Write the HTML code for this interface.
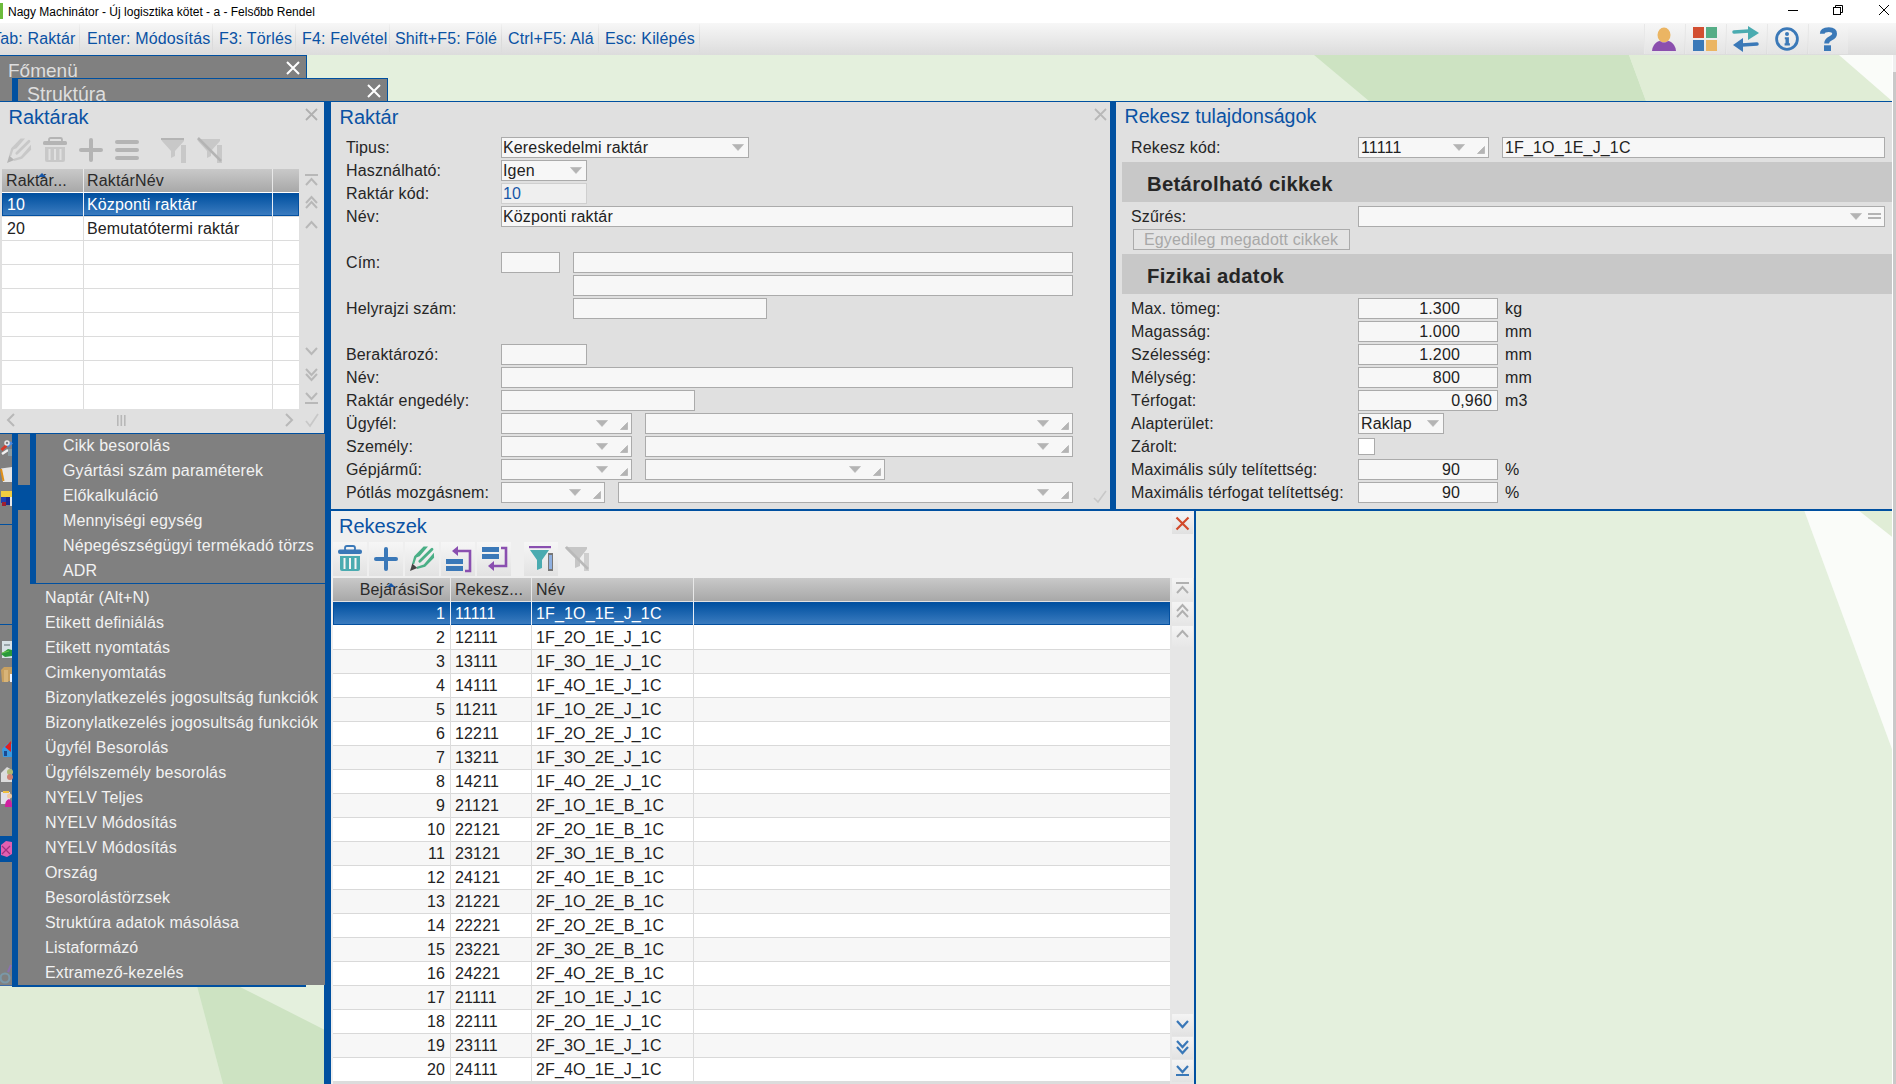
<!DOCTYPE html><html><head><meta charset="utf-8"><style>body{margin:0;width:1896px;height:1084px;overflow:hidden;position:relative;font-family:"Liberation Sans",sans-serif;background:#e4f0dd}div{box-sizing:border-box}</style></head><body><svg style="position:absolute;left:0;top:0" width="1896" height="1084">
<rect x="0" y="55" width="1896" height="1029" fill="#e4f0dd"/>
<polygon points="1314,55 1629,55 1646,101 1369,101" fill="#cde3c2"/>
<polygon points="1629,55 1839,55 1892,101 1646,101" fill="#e0edd6"/>
<polygon points="1839,55 1896,55 1896,101 1892,101" fill="#fafcf9"/>
<polygon points="1804,510 1896,510 1896,760" fill="#fafcf9"/>
<polygon points="1858,510 1896,510 1896,540" fill="#e0edd6"/>
<polygon points="0,986 197,986 223,1084 0,1084" fill="#e0ecd6"/>
<polygon points="197,986 238,986 325,1030 325,1084 223,1084" fill="#cde3c2"/>
</svg><div style="position:absolute;left:0px;top:0px;width:1896px;height:23px;background:#fff"></div><div style="position:absolute;left:0px;top:3px;width:3px;height:16px;background:#6cbb3c"></div><div style="position:absolute;left:8px;top:5.84px;font-size:12px;line-height:12px;color:#000;font-weight:400;white-space:pre;">Nagy Machinátor - Új logisztika kötet - a - Felsőbb Rendel</div><div style="position:absolute;left:1788px;top:10px;width:10px;height:1px;background:#000"></div><svg style="position:absolute;left:1828px;top:0" width="20" height="23"><rect x="5.5" y="7.5" width="7" height="7" fill="none" stroke="#000"/><path d="M7.5 7.5V5.5H14.5V12.5H12.5" fill="none" stroke="#000"/></svg><svg style="position:absolute;left:1874px;top:0" width="20" height="23"><path d="M5 5L15 15M15 5L5 15" stroke="#000" stroke-width="1"/></svg><div style="position:absolute;left:0px;top:23px;width:1896px;height:32px;background:linear-gradient(#f7f7f7,#dcdcdc)"></div><div style="position:absolute;left:-8px;top:31.46px;font-size:16px;line-height:16px;color:#0a52a4;font-weight:400;white-space:pre;letter-spacing:0.15px;">Tab: Raktár</div><div style="position:absolute;left:79px;top:24px;width:1px;height:30px;background:linear-gradient(rgba(220,220,220,0.2),rgba(200,200,200,0.5),rgba(220,220,220,0.2))"></div><div style="position:absolute;left:87px;top:31.46px;font-size:16px;line-height:16px;color:#0a52a4;font-weight:400;white-space:pre;letter-spacing:0.15px;">Enter: Módosítás</div><div style="position:absolute;left:212px;top:24px;width:1px;height:30px;background:linear-gradient(rgba(220,220,220,0.2),rgba(200,200,200,0.5),rgba(220,220,220,0.2))"></div><div style="position:absolute;left:219px;top:31.46px;font-size:16px;line-height:16px;color:#0a52a4;font-weight:400;white-space:pre;letter-spacing:0.15px;">F3: Törlés</div><div style="position:absolute;left:295px;top:24px;width:1px;height:30px;background:linear-gradient(rgba(220,220,220,0.2),rgba(200,200,200,0.5),rgba(220,220,220,0.2))"></div><div style="position:absolute;left:302px;top:31.46px;font-size:16px;line-height:16px;color:#0a52a4;font-weight:400;white-space:pre;letter-spacing:0.15px;">F4: Felvétel</div><div style="position:absolute;left:389px;top:24px;width:1px;height:30px;background:linear-gradient(rgba(220,220,220,0.2),rgba(200,200,200,0.5),rgba(220,220,220,0.2))"></div><div style="position:absolute;left:395px;top:31.46px;font-size:16px;line-height:16px;color:#0a52a4;font-weight:400;white-space:pre;letter-spacing:0.15px;">Shift+F5: Fölé</div><div style="position:absolute;left:501px;top:24px;width:1px;height:30px;background:linear-gradient(rgba(220,220,220,0.2),rgba(200,200,200,0.5),rgba(220,220,220,0.2))"></div><div style="position:absolute;left:508px;top:31.46px;font-size:16px;line-height:16px;color:#0a52a4;font-weight:400;white-space:pre;letter-spacing:0.15px;">Ctrl+F5: Alá</div><div style="position:absolute;left:598px;top:24px;width:1px;height:30px;background:linear-gradient(rgba(220,220,220,0.2),rgba(200,200,200,0.5),rgba(220,220,220,0.2))"></div><div style="position:absolute;left:605px;top:31.46px;font-size:16px;line-height:16px;color:#0a52a4;font-weight:400;white-space:pre;letter-spacing:0.15px;">Esc: Kilépés</div><div style="position:absolute;left:699px;top:24px;width:1px;height:30px;background:linear-gradient(rgba(220,220,220,0.2),rgba(200,200,200,0.5),rgba(220,220,220,0.2))"></div><div style="position:absolute;left:0px;top:55px;width:306px;height:1px;background:#0050a0"></div><div style="position:absolute;left:306px;top:55px;width:1px;height:23px;background:#0050a0"></div><div style="position:absolute;left:0px;top:56px;width:306px;height:45px;background:#808080"></div><div style="position:absolute;left:0;top:56px;width:306px;height:22px;overflow:hidden"><div style="position:absolute;left:8px;top:5.4px;font-size:19px;line-height:19px;color:#dedede;white-space:pre">Főmenü</div></div><svg style="position:absolute;left:285px;top:60px" width="16" height="16"><path d="M2 2L14 14M14 2L2 14" stroke="#fff" stroke-width="2"/></svg><div style="position:absolute;left:12px;top:78px;width:376px;height:1px;background:#0050a0"></div><div style="position:absolute;left:387px;top:78px;width:1px;height:23px;background:#0050a0"></div><div style="position:absolute;left:12px;top:79px;width:375px;height:22px;background:#808080"></div><div style="position:absolute;left:12px;top:79px;width:6px;height:22px;background:#0050a0"></div><div style="position:absolute;left:18px;top:79px;width:369px;height:22px;overflow:hidden"><div style="position:absolute;left:9px;top:5.899999999999999px;font-size:19.5px;line-height:19.5px;color:#dedede;white-space:pre">Struktúra</div></div><svg style="position:absolute;left:366px;top:83px" width="16" height="16"><path d="M2 2L14 14M14 2L2 14" stroke="#fff" stroke-width="2"/></svg><div style="position:absolute;left:0px;top:101px;width:1892px;height:1px;background:#0050a0"></div><div style="position:absolute;left:0px;top:102px;width:324px;height:332px;background:#e0e0e0"></div><div style="position:absolute;left:324px;top:102px;width:7px;height:982px;background:#0050a0"></div><div style="position:absolute;left:331px;top:102px;width:779px;height:407px;background:#e0e0e0"></div><div style="position:absolute;left:1110px;top:102px;width:6px;height:407px;background:#0050a0"></div><div style="position:absolute;left:1116px;top:102px;width:776px;height:407px;background:#e0e0e0"></div><div style="position:absolute;left:1892px;top:55px;width:1px;height:1029px;background:#ffffff"></div><div style="position:absolute;left:1893px;top:55px;width:3px;height:17px;background:#efefef"></div><div style="position:absolute;left:1893px;top:72px;width:3px;height:1012px;background:#c9c9c9"></div><div style="position:absolute;left:331px;top:509px;width:1561px;height:2px;background:#0050a0"></div><div style="position:absolute;left:8.5px;top:106.87px;font-size:20px;line-height:20px;color:#0a52a4;font-weight:400;white-space:pre;">Raktárak</div><svg style="position:absolute;left:305px;top:108px" width="13" height="13"><path d="M1 1L12 12M12 1L1 12" stroke="#b0b0b0" stroke-width="1.8"/></svg><svg style="position:absolute;left:0;top:130px" width="240" height="40">
<path d="M9 26L11.2 18.3L20.6 8.6H25L16.6 18.2L13.4 19.6L11.2 26Z" fill="#c8c8c8"/>
<path d="M30.9 14.8L31.1 19.8L22.2 28.8L14 31L13.8 28.8L20.8 26.6Z" fill="#c8c8c8"/>
<path d="M16.8 23.2L29 11.2" stroke="#c8c8c8" stroke-width="2.8" stroke-linecap="round"/>
<path d="M7 33L9.3 25.5L14.3 30Z" fill="#b4b4b4"/>
<rect x="43" y="11" width="24" height="4" rx="1.5" fill="#b4b4b4"/>
<rect x="49" y="8" width="13" height="4" rx="1.5" fill="none" stroke="#b4b4b4" stroke-width="1.8"/>
<path d="M45 17H65V30Q65 32 63 32H47Q45 32 45 30Z" fill="#c8c8c8"/>
<rect x="48.5" y="19" width="2" height="11" fill="#e0e0e0"/><rect x="54" y="19" width="2" height="11" fill="#e0e0e0"/><rect x="59.5" y="19" width="2" height="11" fill="#e0e0e0"/>
<rect x="89" y="8" width="4" height="24" rx="2" fill="#b4b4b4"/><rect x="79" y="18" width="24" height="4" rx="2" fill="#b4b4b4"/>
<rect x="115" y="10" width="24" height="4" rx="2" fill="#b4b4b4"/><rect x="115" y="18" width="24" height="4" rx="2" fill="#b4b4b4"/><rect x="115" y="26" width="24" height="4" rx="2" fill="#b4b4b4"/>
<path d="M161 9H184V11L175 21V26L171 28V21L162 11Z" fill="#c8c8c8"/><rect x="161" y="8" width="23" height="2" fill="#b4b4b4"/>
<rect x="181" y="15" width="5" height="18" fill="#c8c8c8"/>
<path d="M197 9H220V11L211 21V26L207 28V21L198 11Z" fill="#c8c8c8"/><rect x="217" y="15" width="5" height="18" fill="#c8c8c8"/>
<path d="M198 8L221 31" stroke="#b4b4b4" stroke-width="2.5"/>
</svg><div style="position:absolute;left:2px;top:169px;width:297px;height:23px;background:linear-gradient(#c9c9c9,#a8a8a8)"></div><div style="position:absolute;left:83px;top:169px;width:1px;height:23px;background:#e8e8e8"></div><div style="position:absolute;left:272px;top:169px;width:1px;height:23px;background:#e8e8e8"></div><div style="position:absolute;left:6px;top:173.46px;font-size:16px;line-height:16px;color:#2a2a2a;font-weight:400;white-space:pre;letter-spacing:0.15px;">Raktár...</div><svg style="position:absolute;left:37px;top:172px" width="10" height="6"><path d="M1 5L5 1L9 5Z" fill="#1656a8"/></svg><div style="position:absolute;left:87px;top:173.46px;font-size:16px;line-height:16px;color:#2a2a2a;font-weight:400;white-space:pre;letter-spacing:0.15px;">RaktárNév</div><div style="position:absolute;left:2px;top:192px;width:297px;height:217px;background:#fff"></div><div style="position:absolute;left:2px;top:193px;width:297px;height:23px;background:linear-gradient(#0050a0,#3a7bbf);border:1px solid #0450a0"></div><div style="position:absolute;left:2px;top:216px;width:297px;height:1px;background:#dcdcdc"></div><div style="position:absolute;left:2px;top:240px;width:297px;height:1px;background:#dcdcdc"></div><div style="position:absolute;left:2px;top:264px;width:297px;height:1px;background:#dcdcdc"></div><div style="position:absolute;left:2px;top:288px;width:297px;height:1px;background:#dcdcdc"></div><div style="position:absolute;left:2px;top:312px;width:297px;height:1px;background:#dcdcdc"></div><div style="position:absolute;left:2px;top:336px;width:297px;height:1px;background:#dcdcdc"></div><div style="position:absolute;left:2px;top:360px;width:297px;height:1px;background:#dcdcdc"></div><div style="position:absolute;left:2px;top:384px;width:297px;height:1px;background:#dcdcdc"></div><div style="position:absolute;left:83px;top:193px;width:1px;height:216px;background:#dcdcdc"></div><div style="position:absolute;left:272px;top:193px;width:1px;height:216px;background:#dcdcdc"></div><div style="position:absolute;left:83px;top:193px;width:1px;height:23px;background:#e8eef6"></div><div style="position:absolute;left:272px;top:193px;width:1px;height:23px;background:#e8eef6"></div><div style="position:absolute;left:7px;top:197.46px;font-size:16px;line-height:16px;color:#fff;font-weight:400;white-space:pre;letter-spacing:0.15px;">10</div><div style="position:absolute;left:87px;top:197.46px;font-size:16px;line-height:16px;color:#fff;font-weight:400;white-space:pre;letter-spacing:0.15px;">Központi raktár</div><div style="position:absolute;left:7px;top:221.46px;font-size:16px;line-height:16px;color:#222;font-weight:400;white-space:pre;letter-spacing:0.15px;">20</div><div style="position:absolute;left:87px;top:221.46px;font-size:16px;line-height:16px;color:#222;font-weight:400;white-space:pre;letter-spacing:0.15px;">Bemutatótermi raktár</div><svg style="position:absolute;left:0;top:0;overflow:visible" width="1" height="1"><rect x="305" y="174" width="13" height="2" fill="#b8b8b8"/><path d="M306 185L311.5 179L317 185" fill="none" stroke="#b8b8b8" stroke-width="2"/><path d="M306 203L311.5 197L317 203" fill="none" stroke="#b8b8b8" stroke-width="2"/><path d="M306 208L311.5 202L317 208" fill="none" stroke="#b8b8b8" stroke-width="2"/><path d="M306 228L311.5 222L317 228" fill="none" stroke="#b8b8b8" stroke-width="2"/><path d="M306 348L311.5 354L317 348" fill="none" stroke="#b8b8b8" stroke-width="2"/><path d="M306 369L311.5 375L317 369" fill="none" stroke="#b8b8b8" stroke-width="2"/><path d="M306 374L311.5 380L317 374" fill="none" stroke="#b8b8b8" stroke-width="2"/><path d="M306 393L311.5 399L317 393" fill="none" stroke="#b8b8b8" stroke-width="2"/><rect x="305" y="402" width="13" height="2" fill="#b8b8b8"/></svg><svg style="position:absolute;left:0;top:405px" width="324" height="28">
<path d="M14 9L8 15L14 21" fill="none" stroke="#b8b8b8" stroke-width="2"/>
<rect x="117" y="10" width="1.6" height="11" fill="#b8b8b8"/><rect x="120.5" y="10" width="1.6" height="11" fill="#b8b8b8"/><rect x="124" y="10" width="1.6" height="11" fill="#b8b8b8"/>
<path d="M286 9L292 15L286 21" fill="none" stroke="#b8b8b8" stroke-width="2"/>
<path d="M306 16L310 21L318 9" fill="none" stroke="#c8c8c8" stroke-width="1.8"/>
</svg><div style="position:absolute;left:0px;top:433px;width:324px;height:1px;background:#0050a0"></div><div style="position:absolute;left:339.5px;top:106.87px;font-size:20px;line-height:20px;color:#0a52a4;font-weight:400;white-space:pre;">Raktár</div><svg style="position:absolute;left:1094px;top:108px" width="13" height="13"><path d="M1 1L12 12M12 1L1 12" stroke="#b8b8b8" stroke-width="1.8"/></svg><div style="position:absolute;left:346px;top:140.16px;font-size:16px;line-height:16px;color:#262626;font-weight:400;white-space:pre;letter-spacing:0.15px;">Tipus:</div><div style="position:absolute;left:346px;top:163.16px;font-size:16px;line-height:16px;color:#262626;font-weight:400;white-space:pre;letter-spacing:0.15px;">Használható:</div><div style="position:absolute;left:346px;top:186.16px;font-size:16px;line-height:16px;color:#262626;font-weight:400;white-space:pre;letter-spacing:0.15px;">Raktár kód:</div><div style="position:absolute;left:346px;top:209.16px;font-size:16px;line-height:16px;color:#262626;font-weight:400;white-space:pre;letter-spacing:0.15px;">Név:</div><div style="position:absolute;left:346px;top:255.16px;font-size:16px;line-height:16px;color:#262626;font-weight:400;white-space:pre;letter-spacing:0.15px;">Cím:</div><div style="position:absolute;left:346px;top:301.16px;font-size:16px;line-height:16px;color:#262626;font-weight:400;white-space:pre;letter-spacing:0.15px;">Helyrajzi szám:</div><div style="position:absolute;left:346px;top:347.16px;font-size:16px;line-height:16px;color:#262626;font-weight:400;white-space:pre;letter-spacing:0.15px;">Beraktározó:</div><div style="position:absolute;left:346px;top:370.16px;font-size:16px;line-height:16px;color:#262626;font-weight:400;white-space:pre;letter-spacing:0.15px;">Név:</div><div style="position:absolute;left:346px;top:393.16px;font-size:16px;line-height:16px;color:#262626;font-weight:400;white-space:pre;letter-spacing:0.15px;">Raktár engedély:</div><div style="position:absolute;left:346px;top:416.16px;font-size:16px;line-height:16px;color:#262626;font-weight:400;white-space:pre;letter-spacing:0.15px;">Ügyfél:</div><div style="position:absolute;left:346px;top:439.16px;font-size:16px;line-height:16px;color:#262626;font-weight:400;white-space:pre;letter-spacing:0.15px;">Személy:</div><div style="position:absolute;left:346px;top:462.16px;font-size:16px;line-height:16px;color:#262626;font-weight:400;white-space:pre;letter-spacing:0.15px;">Gépjármű:</div><div style="position:absolute;left:346px;top:485.16px;font-size:16px;line-height:16px;color:#262626;font-weight:400;white-space:pre;letter-spacing:0.15px;">Pótlás mozgásnem:</div><div style="position:absolute;left:501px;top:137px;width:248px;height:21px;background:#f7f7f7;border:1px solid #ababab;box-sizing:border-box"></div><div style="position:absolute;left:503px;top:140.16px;font-size:16px;line-height:16px;color:#222;font-weight:400;white-space:pre;letter-spacing:0.15px;">Kereskedelmi raktár</div><svg style="position:absolute;left:732px;top:144px" width="12" height="7"><path d="M0.5 0.5H11.5L6 6.5Z" fill="#b4b4b4" stroke="#b4b4b4" stroke-width="0.6" stroke-linejoin="round"/></svg><div style="position:absolute;left:501px;top:160px;width:86px;height:21px;background:#f7f7f7;border:1px solid #ababab;box-sizing:border-box"></div><div style="position:absolute;left:503px;top:163.16px;font-size:16px;line-height:16px;color:#222;font-weight:400;white-space:pre;letter-spacing:0.15px;">Igen</div><svg style="position:absolute;left:570px;top:167px" width="12" height="7"><path d="M0.5 0.5H11.5L6 6.5Z" fill="#b4b4b4" stroke="#b4b4b4" stroke-width="0.6" stroke-linejoin="round"/></svg><div style="position:absolute;left:501px;top:183px;width:86px;height:21px;background:#efefef;border:1px solid #cfcfcf;box-sizing:border-box"></div><div style="position:absolute;left:503px;top:186.16px;font-size:16px;line-height:16px;color:#1656a8;font-weight:400;white-space:pre;letter-spacing:0.15px;">10</div><div style="position:absolute;left:501px;top:206px;width:572px;height:21px;background:#f7f7f7;border:1px solid #ababab;box-sizing:border-box"></div><div style="position:absolute;left:503px;top:209.16px;font-size:16px;line-height:16px;color:#222;font-weight:400;white-space:pre;letter-spacing:0.15px;">Központi raktár</div><div style="position:absolute;left:501px;top:252px;width:59px;height:21px;background:#f7f7f7;border:1px solid #ababab;box-sizing:border-box"></div><div style="position:absolute;left:573px;top:252px;width:500px;height:21px;background:#f7f7f7;border:1px solid #ababab;box-sizing:border-box"></div><div style="position:absolute;left:573px;top:275px;width:500px;height:21px;background:#f7f7f7;border:1px solid #ababab;box-sizing:border-box"></div><div style="position:absolute;left:573px;top:298px;width:194px;height:21px;background:#f7f7f7;border:1px solid #ababab;box-sizing:border-box"></div><div style="position:absolute;left:501px;top:344px;width:86px;height:21px;background:#f7f7f7;border:1px solid #ababab;box-sizing:border-box"></div><div style="position:absolute;left:501px;top:367px;width:572px;height:21px;background:#f7f7f7;border:1px solid #ababab;box-sizing:border-box"></div><div style="position:absolute;left:501px;top:390px;width:194px;height:21px;background:#f7f7f7;border:1px solid #ababab;box-sizing:border-box"></div><div style="position:absolute;left:501px;top:413px;width:131px;height:21px;background:#f7f7f7;border:1px solid #ababab;box-sizing:border-box"></div><svg style="position:absolute;left:596px;top:420px" width="12" height="7"><path d="M0.5 0.5H11.5L6 6.5Z" fill="#b4b4b4" stroke="#b4b4b4" stroke-width="0.6" stroke-linejoin="round"/></svg><svg style="position:absolute;left:620px;top:422px" width="8" height="8"><path d="M7.5 0.5V7.5H0.5Z" fill="#b4b4b4" stroke="#b4b4b4" stroke-width="0.8" stroke-linejoin="round"/></svg><div style="position:absolute;left:645px;top:413px;width:428px;height:21px;background:#f7f7f7;border:1px solid #ababab;box-sizing:border-box"></div><svg style="position:absolute;left:1037px;top:420px" width="12" height="7"><path d="M0.5 0.5H11.5L6 6.5Z" fill="#b4b4b4" stroke="#b4b4b4" stroke-width="0.6" stroke-linejoin="round"/></svg><svg style="position:absolute;left:1061px;top:422px" width="8" height="8"><path d="M7.5 0.5V7.5H0.5Z" fill="#b4b4b4" stroke="#b4b4b4" stroke-width="0.8" stroke-linejoin="round"/></svg><div style="position:absolute;left:501px;top:436px;width:131px;height:21px;background:#f7f7f7;border:1px solid #ababab;box-sizing:border-box"></div><svg style="position:absolute;left:596px;top:443px" width="12" height="7"><path d="M0.5 0.5H11.5L6 6.5Z" fill="#b4b4b4" stroke="#b4b4b4" stroke-width="0.6" stroke-linejoin="round"/></svg><svg style="position:absolute;left:620px;top:445px" width="8" height="8"><path d="M7.5 0.5V7.5H0.5Z" fill="#b4b4b4" stroke="#b4b4b4" stroke-width="0.8" stroke-linejoin="round"/></svg><div style="position:absolute;left:645px;top:436px;width:428px;height:21px;background:#f7f7f7;border:1px solid #ababab;box-sizing:border-box"></div><svg style="position:absolute;left:1037px;top:443px" width="12" height="7"><path d="M0.5 0.5H11.5L6 6.5Z" fill="#b4b4b4" stroke="#b4b4b4" stroke-width="0.6" stroke-linejoin="round"/></svg><svg style="position:absolute;left:1061px;top:445px" width="8" height="8"><path d="M7.5 0.5V7.5H0.5Z" fill="#b4b4b4" stroke="#b4b4b4" stroke-width="0.8" stroke-linejoin="round"/></svg><div style="position:absolute;left:501px;top:459px;width:131px;height:21px;background:#f7f7f7;border:1px solid #ababab;box-sizing:border-box"></div><svg style="position:absolute;left:596px;top:466px" width="12" height="7"><path d="M0.5 0.5H11.5L6 6.5Z" fill="#b4b4b4" stroke="#b4b4b4" stroke-width="0.6" stroke-linejoin="round"/></svg><svg style="position:absolute;left:620px;top:468px" width="8" height="8"><path d="M7.5 0.5V7.5H0.5Z" fill="#b4b4b4" stroke="#b4b4b4" stroke-width="0.8" stroke-linejoin="round"/></svg><div style="position:absolute;left:645px;top:459px;width:240px;height:21px;background:#f7f7f7;border:1px solid #ababab;box-sizing:border-box"></div><svg style="position:absolute;left:849px;top:466px" width="12" height="7"><path d="M0.5 0.5H11.5L6 6.5Z" fill="#b4b4b4" stroke="#b4b4b4" stroke-width="0.6" stroke-linejoin="round"/></svg><svg style="position:absolute;left:873px;top:468px" width="8" height="8"><path d="M7.5 0.5V7.5H0.5Z" fill="#b4b4b4" stroke="#b4b4b4" stroke-width="0.8" stroke-linejoin="round"/></svg><div style="position:absolute;left:501px;top:482px;width:104px;height:21px;background:#f7f7f7;border:1px solid #ababab;box-sizing:border-box"></div><svg style="position:absolute;left:569px;top:489px" width="12" height="7"><path d="M0.5 0.5H11.5L6 6.5Z" fill="#b4b4b4" stroke="#b4b4b4" stroke-width="0.6" stroke-linejoin="round"/></svg><svg style="position:absolute;left:593px;top:491px" width="8" height="8"><path d="M7.5 0.5V7.5H0.5Z" fill="#b4b4b4" stroke="#b4b4b4" stroke-width="0.8" stroke-linejoin="round"/></svg><div style="position:absolute;left:618px;top:482px;width:455px;height:21px;background:#f7f7f7;border:1px solid #ababab;box-sizing:border-box"></div><svg style="position:absolute;left:1037px;top:489px" width="12" height="7"><path d="M0.5 0.5H11.5L6 6.5Z" fill="#b4b4b4" stroke="#b4b4b4" stroke-width="0.6" stroke-linejoin="round"/></svg><svg style="position:absolute;left:1061px;top:491px" width="8" height="8"><path d="M7.5 0.5V7.5H0.5Z" fill="#b4b4b4" stroke="#b4b4b4" stroke-width="0.8" stroke-linejoin="round"/></svg><svg style="position:absolute;left:1092px;top:488px" width="16" height="16"><path d="M2 10L6 14L14 3" fill="none" stroke="#c8c8c8" stroke-width="1.6"/></svg><div style="position:absolute;left:1124.5px;top:107.31px;font-size:19.6px;line-height:19.6px;color:#0a52a4;font-weight:400;white-space:pre;">Rekesz tulajdonságok</div><div style="position:absolute;left:1131px;top:140.16px;font-size:16px;line-height:16px;color:#262626;font-weight:400;white-space:pre;letter-spacing:0.15px;">Rekesz kód:</div><div style="position:absolute;left:1358px;top:137px;width:131px;height:21px;background:#f7f7f7;border:1px solid #ababab;box-sizing:border-box"></div><svg style="position:absolute;left:1453px;top:144px" width="12" height="7"><path d="M0.5 0.5H11.5L6 6.5Z" fill="#b4b4b4" stroke="#b4b4b4" stroke-width="0.6" stroke-linejoin="round"/></svg><svg style="position:absolute;left:1477px;top:146px" width="8" height="8"><path d="M7.5 0.5V7.5H0.5Z" fill="#b4b4b4" stroke="#b4b4b4" stroke-width="0.8" stroke-linejoin="round"/></svg><div style="position:absolute;left:1361px;top:140.16px;font-size:16px;line-height:16px;color:#222;font-weight:400;white-space:pre;letter-spacing:0.15px;">11111</div><div style="position:absolute;left:1502px;top:137px;width:383px;height:21px;background:#f7f7f7;border:1px solid #ababab;box-sizing:border-box"></div><div style="position:absolute;left:1505px;top:140.16px;font-size:16px;line-height:16px;color:#222;font-weight:400;white-space:pre;letter-spacing:0.15px;">1F_1O_1E_J_1C</div><div style="position:absolute;left:1122px;top:162px;width:770px;height:40px;background:#c8c8c8"></div><div style="position:absolute;left:1147px;top:174.32px;font-size:20.3px;line-height:20.3px;color:#262626;font-weight:700;white-space:pre;letter-spacing:0.3px">Betárolható cikkek</div><div style="position:absolute;left:1131px;top:209.16px;font-size:16px;line-height:16px;color:#262626;font-weight:400;white-space:pre;letter-spacing:0.15px;">Szűrés:</div><div style="position:absolute;left:1358px;top:206px;width:527px;height:21px;background:#f7f7f7;border:1px solid #ababab;box-sizing:border-box"></div><svg style="position:absolute;left:1850px;top:213px" width="12" height="7"><path d="M0.5 0.5H11.5L6 6.5Z" fill="#b4b4b4" stroke="#b4b4b4" stroke-width="0.6" stroke-linejoin="round"/></svg><svg style="position:absolute;left:1867px;top:210px" width="16" height="12"><rect x="1" y="3" width="13" height="2" fill="#b4b4b4"/><rect x="1" y="7" width="13" height="2" fill="#b4b4b4"/></svg><div style="position:absolute;left:1133px;top:229px;width:217px;height:21px;border:1px solid #ababab;box-sizing:border-box;background:#e4e4e4"></div><div style="position:absolute;left:1144px;top:232.46px;font-size:16px;line-height:16px;color:#a8a8a8;font-weight:400;white-space:pre;letter-spacing:0.15px;">Egyedileg megadott cikkek</div><div style="position:absolute;left:1122px;top:254px;width:770px;height:40px;background:#c8c8c8"></div><div style="position:absolute;left:1147px;top:266.12px;font-size:20.3px;line-height:20.3px;color:#262626;font-weight:700;white-space:pre;letter-spacing:0.3px">Fizikai adatok</div><div style="position:absolute;left:1131px;top:301.16px;font-size:16px;line-height:16px;color:#262626;font-weight:400;white-space:pre;letter-spacing:0.15px;">Max. tömeg:</div><div style="position:absolute;left:1358px;top:298px;width:140px;height:21px;background:#f7f7f7;border:1px solid #ababab;box-sizing:border-box"></div><div style="position:absolute;left:860px;width:600px;text-align:right;top:301.16px;font-size:16px;line-height:16px;color:#222;font-weight:400;white-space:pre;letter-spacing:0.15px;">1.300</div><div style="position:absolute;left:1505px;top:301.16px;font-size:16px;line-height:16px;color:#222;font-weight:400;white-space:pre;letter-spacing:0.15px;">kg</div><div style="position:absolute;left:1131px;top:324.16px;font-size:16px;line-height:16px;color:#262626;font-weight:400;white-space:pre;letter-spacing:0.15px;">Magasság:</div><div style="position:absolute;left:1358px;top:321px;width:140px;height:21px;background:#f7f7f7;border:1px solid #ababab;box-sizing:border-box"></div><div style="position:absolute;left:860px;width:600px;text-align:right;top:324.16px;font-size:16px;line-height:16px;color:#222;font-weight:400;white-space:pre;letter-spacing:0.15px;">1.000</div><div style="position:absolute;left:1505px;top:324.16px;font-size:16px;line-height:16px;color:#222;font-weight:400;white-space:pre;letter-spacing:0.15px;">mm</div><div style="position:absolute;left:1131px;top:347.16px;font-size:16px;line-height:16px;color:#262626;font-weight:400;white-space:pre;letter-spacing:0.15px;">Szélesség:</div><div style="position:absolute;left:1358px;top:344px;width:140px;height:21px;background:#f7f7f7;border:1px solid #ababab;box-sizing:border-box"></div><div style="position:absolute;left:860px;width:600px;text-align:right;top:347.16px;font-size:16px;line-height:16px;color:#222;font-weight:400;white-space:pre;letter-spacing:0.15px;">1.200</div><div style="position:absolute;left:1505px;top:347.16px;font-size:16px;line-height:16px;color:#222;font-weight:400;white-space:pre;letter-spacing:0.15px;">mm</div><div style="position:absolute;left:1131px;top:370.16px;font-size:16px;line-height:16px;color:#262626;font-weight:400;white-space:pre;letter-spacing:0.15px;">Mélység:</div><div style="position:absolute;left:1358px;top:367px;width:140px;height:21px;background:#f7f7f7;border:1px solid #ababab;box-sizing:border-box"></div><div style="position:absolute;left:860px;width:600px;text-align:right;top:370.16px;font-size:16px;line-height:16px;color:#222;font-weight:400;white-space:pre;letter-spacing:0.15px;">800</div><div style="position:absolute;left:1505px;top:370.16px;font-size:16px;line-height:16px;color:#222;font-weight:400;white-space:pre;letter-spacing:0.15px;">mm</div><div style="position:absolute;left:1131px;top:393.16px;font-size:16px;line-height:16px;color:#262626;font-weight:400;white-space:pre;letter-spacing:0.15px;">Térfogat:</div><div style="position:absolute;left:1358px;top:390px;width:140px;height:21px;background:#f7f7f7;border:1px solid #ababab;box-sizing:border-box"></div><div style="position:absolute;left:892px;width:600px;text-align:right;top:393.16px;font-size:16px;line-height:16px;color:#222;font-weight:400;white-space:pre;letter-spacing:0.15px;">0,960</div><div style="position:absolute;left:1505px;top:393.16px;font-size:16px;line-height:16px;color:#222;font-weight:400;white-space:pre;letter-spacing:0.15px;">m3</div><div style="position:absolute;left:1131px;top:416.16px;font-size:16px;line-height:16px;color:#262626;font-weight:400;white-space:pre;letter-spacing:0.15px;">Alapterület:</div><div style="position:absolute;left:1358px;top:413px;width:86px;height:21px;background:#f7f7f7;border:1px solid #ababab;box-sizing:border-box"></div><svg style="position:absolute;left:1427px;top:420px" width="12" height="7"><path d="M0.5 0.5H11.5L6 6.5Z" fill="#b4b4b4" stroke="#b4b4b4" stroke-width="0.6" stroke-linejoin="round"/></svg><div style="position:absolute;left:1361px;top:416.16px;font-size:16px;line-height:16px;color:#222;font-weight:400;white-space:pre;letter-spacing:0.15px;">Raklap</div><div style="position:absolute;left:1131px;top:439.16px;font-size:16px;line-height:16px;color:#262626;font-weight:400;white-space:pre;letter-spacing:0.15px;">Zárolt:</div><div style="position:absolute;left:1358px;top:438px;width:17px;height:17px;background:#fff;border:1px solid #ababab;box-sizing:border-box"></div><div style="position:absolute;left:1131px;top:462.16px;font-size:16px;line-height:16px;color:#262626;font-weight:400;white-space:pre;letter-spacing:0.15px;">Maximális súly telítettség:</div><div style="position:absolute;left:1358px;top:459px;width:140px;height:21px;background:#f7f7f7;border:1px solid #ababab;box-sizing:border-box"></div><div style="position:absolute;left:860px;width:600px;text-align:right;top:462.16px;font-size:16px;line-height:16px;color:#222;font-weight:400;white-space:pre;letter-spacing:0.15px;">90</div><div style="position:absolute;left:1505px;top:462.16px;font-size:16px;line-height:16px;color:#222;font-weight:400;white-space:pre;letter-spacing:0.15px;">%</div><div style="position:absolute;left:1131px;top:485.16px;font-size:16px;line-height:16px;color:#262626;font-weight:400;white-space:pre;letter-spacing:0.15px;">Maximális térfogat telítettség:</div><div style="position:absolute;left:1358px;top:482px;width:140px;height:21px;background:#f7f7f7;border:1px solid #ababab;box-sizing:border-box"></div><div style="position:absolute;left:860px;width:600px;text-align:right;top:485.16px;font-size:16px;line-height:16px;color:#222;font-weight:400;white-space:pre;letter-spacing:0.15px;">90</div><div style="position:absolute;left:1505px;top:485.16px;font-size:16px;line-height:16px;color:#222;font-weight:400;white-space:pre;letter-spacing:0.15px;">%</div><div style="position:absolute;left:331px;top:511px;width:863px;height:573px;background:#efefef"></div><div style="position:absolute;left:1194px;top:509px;width:2px;height:575px;background:#0050a0"></div><div style="position:absolute;left:339px;top:515.67px;font-size:20px;line-height:20px;color:#0a52a4;font-weight:400;white-space:pre;">Rekeszek</div><div style="position:absolute;left:1172px;top:513px;width:21px;height:21px;background:linear-gradient(#f4f4f4,#e0e0e0)"></div><svg style="position:absolute;left:1175px;top:516px" width="15" height="15"><path d="M1.5 1.5L13.5 13.5M13.5 1.5L1.5 13.5" stroke="#d2492a" stroke-width="2.2"/></svg><div style="position:absolute;left:333px;top:542px;width:34px;height:34px;background:linear-gradient(#f6f6f6,#e2e2e2)"></div><div style="position:absolute;left:369px;top:542px;width:34px;height:34px;background:linear-gradient(#f6f6f6,#e2e2e2)"></div><div style="position:absolute;left:405px;top:542px;width:34px;height:34px;background:linear-gradient(#f6f6f6,#e2e2e2)"></div><div style="position:absolute;left:441px;top:542px;width:34px;height:34px;background:linear-gradient(#f6f6f6,#e2e2e2)"></div><div style="position:absolute;left:477px;top:542px;width:34px;height:34px;background:linear-gradient(#f6f6f6,#e2e2e2)"></div><div style="position:absolute;left:524px;top:542px;width:34px;height:34px;background:linear-gradient(#f6f6f6,#e2e2e2)"></div><svg style="position:absolute;left:0;top:0;overflow:visible" width="1" height="1">
<rect x="338" y="549.5" width="24" height="4.5" rx="2" fill="#3a78b8"/>
<rect x="345" y="546" width="10" height="5" rx="2" fill="none" stroke="#3a78b8" stroke-width="1.8"/>
<path d="M340 556H360V569Q360 571 358 571H342Q340 571 340 569Z" fill="#4aabb0"/>
<rect x="343.5" y="558" width="2" height="11" fill="#f4f4f4"/><rect x="349" y="558" width="2" height="11" fill="#f4f4f4"/><rect x="354.5" y="558" width="2" height="11" fill="#f4f4f4"/>
<rect x="384" y="547" width="4" height="24" rx="2" fill="#3a78b8"/><rect x="374" y="557" width="24" height="4" rx="2" fill="#3a78b8"/>
<path d="M412 564L414.2 556.3L423.6 546.6H428L419.6 556.2L416.4 557.6L414.2 564Z" fill="#4aaf86"/>
<path d="M433.9 552.8L434.1 557.8L425.2 566.8L417 569L416.8 566.8L423.8 564.6Z" fill="#4aaf86"/>
<path d="M419.8 561.2L432 549.2" stroke="#4aaf86" stroke-width="2.8" stroke-linecap="round"/>
<path d="M410 571L412.3 563.5L417.3 568Z" fill="#444"/>
<rect x="446" y="559" width="17" height="5" fill="#3a78b8"/><rect x="446" y="566" width="17" height="5" fill="#3a78b8"/>
<path d="M465 571H470V551H457" fill="none" stroke="#8a4fb0" stroke-width="2.6"/>
<path d="M452 551L458 546V556Z" fill="#8a4fb0"/>
<rect x="482" y="547" width="17" height="5" fill="#3a78b8"/><rect x="482" y="554" width="17" height="5" fill="#3a78b8"/>
<path d="M501 548H506V566H493" fill="none" stroke="#8a4fb0" stroke-width="2.6"/>
<path d="M488 566L494 561V571Z" fill="#8a4fb0"/>
<rect x="529" y="546" width="22" height="2.2" fill="#8a4fb0"/>
<path d="M530 550H549L542 560V568L537 570V560Z" fill="#4aabb0"/>
<rect x="548" y="553" width="5" height="18" fill="#777"/><rect x="549" y="555" width="3" height="14" fill="#8fb0e0"/>
<path d="M565 547H587V549L580 558V566L575 568V558L566 549Z" fill="#c6c6c6"/>
<rect x="584" y="553" width="5" height="18" fill="#cfcfcf"/>
<path d="M566 547L588 569" stroke="#b9b9b9" stroke-width="2.5"/>
</svg><div style="position:absolute;left:333px;top:578px;width:837px;height:23px;background:linear-gradient(#c9c9c9,#a8a8a8)"></div><div style="position:absolute;left:450px;top:578px;width:1px;height:23px;background:#e8e8e8"></div><div style="position:absolute;left:531px;top:578px;width:1px;height:23px;background:#e8e8e8"></div><div style="position:absolute;left:693px;top:578px;width:1px;height:23px;background:#e8e8e8"></div><div style="position:absolute;left:-156px;width:600px;text-align:right;top:582.46px;font-size:16px;line-height:16px;color:#2a2a2a;font-weight:400;white-space:pre;letter-spacing:0.15px;">BejárásiSor</div><svg style="position:absolute;left:386px;top:581.5px" width="10" height="6"><path d="M1 5L5 1L9 5Z" fill="#1656a8"/></svg><div style="position:absolute;left:455px;top:582.46px;font-size:16px;line-height:16px;color:#2a2a2a;font-weight:400;white-space:pre;letter-spacing:0.15px;">Rekesz...</div><div style="position:absolute;left:536px;top:582.46px;font-size:16px;line-height:16px;color:#2a2a2a;font-weight:400;white-space:pre;letter-spacing:0.15px;">Név</div><div style="position:absolute;left:333px;top:601px;width:837px;height:1px;background:#e2e2e2"></div><div style="position:absolute;left:333px;top:602px;width:837px;height:23px;background:linear-gradient(#0050a0,#3a7bbf);border:1px solid #0450a0"></div><div style="position:absolute;left:450px;top:601px;width:1px;height:24px;background:#e8eef6"></div><div style="position:absolute;left:531px;top:601px;width:1px;height:24px;background:#e8eef6"></div><div style="position:absolute;left:693px;top:601px;width:1px;height:24px;background:#e8eef6"></div><div style="position:absolute;left:-155px;width:600px;text-align:right;top:606.46px;font-size:16px;line-height:16px;color:#fff;font-weight:400;white-space:pre;letter-spacing:0.15px;">1</div><div style="position:absolute;left:455px;top:606.46px;font-size:16px;line-height:16px;color:#fff;font-weight:400;white-space:pre;letter-spacing:0.15px;">11111</div><div style="position:absolute;left:536px;top:606.46px;font-size:16px;line-height:16px;color:#fff;font-weight:400;white-space:pre;letter-spacing:0.15px;">1F_1O_1E_J_1C</div><div style="position:absolute;left:333px;top:625px;width:837px;height:24px;background:#ffffff"></div><div style="position:absolute;left:450px;top:625px;width:1px;height:24px;background:#dcdcdc"></div><div style="position:absolute;left:531px;top:625px;width:1px;height:24px;background:#dcdcdc"></div><div style="position:absolute;left:693px;top:625px;width:1px;height:24px;background:#dcdcdc"></div><div style="position:absolute;left:-155px;width:600px;text-align:right;top:630.46px;font-size:16px;line-height:16px;color:#222;font-weight:400;white-space:pre;letter-spacing:0.15px;">2</div><div style="position:absolute;left:455px;top:630.46px;font-size:16px;line-height:16px;color:#222;font-weight:400;white-space:pre;letter-spacing:0.15px;">12111</div><div style="position:absolute;left:536px;top:630.46px;font-size:16px;line-height:16px;color:#222;font-weight:400;white-space:pre;letter-spacing:0.15px;">1F_2O_1E_J_1C</div><div style="position:absolute;left:333px;top:649px;width:837px;height:24px;background:#f7f7f7"></div><div style="position:absolute;left:333px;top:649px;width:837px;height:1px;background:#d9d9d9"></div><div style="position:absolute;left:450px;top:649px;width:1px;height:24px;background:#dcdcdc"></div><div style="position:absolute;left:531px;top:649px;width:1px;height:24px;background:#dcdcdc"></div><div style="position:absolute;left:693px;top:649px;width:1px;height:24px;background:#dcdcdc"></div><div style="position:absolute;left:-155px;width:600px;text-align:right;top:654.46px;font-size:16px;line-height:16px;color:#222;font-weight:400;white-space:pre;letter-spacing:0.15px;">3</div><div style="position:absolute;left:455px;top:654.46px;font-size:16px;line-height:16px;color:#222;font-weight:400;white-space:pre;letter-spacing:0.15px;">13111</div><div style="position:absolute;left:536px;top:654.46px;font-size:16px;line-height:16px;color:#222;font-weight:400;white-space:pre;letter-spacing:0.15px;">1F_3O_1E_J_1C</div><div style="position:absolute;left:333px;top:673px;width:837px;height:24px;background:#ffffff"></div><div style="position:absolute;left:333px;top:673px;width:837px;height:1px;background:#d9d9d9"></div><div style="position:absolute;left:450px;top:673px;width:1px;height:24px;background:#dcdcdc"></div><div style="position:absolute;left:531px;top:673px;width:1px;height:24px;background:#dcdcdc"></div><div style="position:absolute;left:693px;top:673px;width:1px;height:24px;background:#dcdcdc"></div><div style="position:absolute;left:-155px;width:600px;text-align:right;top:678.46px;font-size:16px;line-height:16px;color:#222;font-weight:400;white-space:pre;letter-spacing:0.15px;">4</div><div style="position:absolute;left:455px;top:678.46px;font-size:16px;line-height:16px;color:#222;font-weight:400;white-space:pre;letter-spacing:0.15px;">14111</div><div style="position:absolute;left:536px;top:678.46px;font-size:16px;line-height:16px;color:#222;font-weight:400;white-space:pre;letter-spacing:0.15px;">1F_4O_1E_J_1C</div><div style="position:absolute;left:333px;top:697px;width:837px;height:24px;background:#f7f7f7"></div><div style="position:absolute;left:333px;top:697px;width:837px;height:1px;background:#d9d9d9"></div><div style="position:absolute;left:450px;top:697px;width:1px;height:24px;background:#dcdcdc"></div><div style="position:absolute;left:531px;top:697px;width:1px;height:24px;background:#dcdcdc"></div><div style="position:absolute;left:693px;top:697px;width:1px;height:24px;background:#dcdcdc"></div><div style="position:absolute;left:-155px;width:600px;text-align:right;top:702.46px;font-size:16px;line-height:16px;color:#222;font-weight:400;white-space:pre;letter-spacing:0.15px;">5</div><div style="position:absolute;left:455px;top:702.46px;font-size:16px;line-height:16px;color:#222;font-weight:400;white-space:pre;letter-spacing:0.15px;">11211</div><div style="position:absolute;left:536px;top:702.46px;font-size:16px;line-height:16px;color:#222;font-weight:400;white-space:pre;letter-spacing:0.15px;">1F_1O_2E_J_1C</div><div style="position:absolute;left:333px;top:721px;width:837px;height:24px;background:#ffffff"></div><div style="position:absolute;left:333px;top:721px;width:837px;height:1px;background:#d9d9d9"></div><div style="position:absolute;left:450px;top:721px;width:1px;height:24px;background:#dcdcdc"></div><div style="position:absolute;left:531px;top:721px;width:1px;height:24px;background:#dcdcdc"></div><div style="position:absolute;left:693px;top:721px;width:1px;height:24px;background:#dcdcdc"></div><div style="position:absolute;left:-155px;width:600px;text-align:right;top:726.46px;font-size:16px;line-height:16px;color:#222;font-weight:400;white-space:pre;letter-spacing:0.15px;">6</div><div style="position:absolute;left:455px;top:726.46px;font-size:16px;line-height:16px;color:#222;font-weight:400;white-space:pre;letter-spacing:0.15px;">12211</div><div style="position:absolute;left:536px;top:726.46px;font-size:16px;line-height:16px;color:#222;font-weight:400;white-space:pre;letter-spacing:0.15px;">1F_2O_2E_J_1C</div><div style="position:absolute;left:333px;top:745px;width:837px;height:24px;background:#f7f7f7"></div><div style="position:absolute;left:333px;top:745px;width:837px;height:1px;background:#d9d9d9"></div><div style="position:absolute;left:450px;top:745px;width:1px;height:24px;background:#dcdcdc"></div><div style="position:absolute;left:531px;top:745px;width:1px;height:24px;background:#dcdcdc"></div><div style="position:absolute;left:693px;top:745px;width:1px;height:24px;background:#dcdcdc"></div><div style="position:absolute;left:-155px;width:600px;text-align:right;top:750.46px;font-size:16px;line-height:16px;color:#222;font-weight:400;white-space:pre;letter-spacing:0.15px;">7</div><div style="position:absolute;left:455px;top:750.46px;font-size:16px;line-height:16px;color:#222;font-weight:400;white-space:pre;letter-spacing:0.15px;">13211</div><div style="position:absolute;left:536px;top:750.46px;font-size:16px;line-height:16px;color:#222;font-weight:400;white-space:pre;letter-spacing:0.15px;">1F_3O_2E_J_1C</div><div style="position:absolute;left:333px;top:769px;width:837px;height:24px;background:#ffffff"></div><div style="position:absolute;left:333px;top:769px;width:837px;height:1px;background:#d9d9d9"></div><div style="position:absolute;left:450px;top:769px;width:1px;height:24px;background:#dcdcdc"></div><div style="position:absolute;left:531px;top:769px;width:1px;height:24px;background:#dcdcdc"></div><div style="position:absolute;left:693px;top:769px;width:1px;height:24px;background:#dcdcdc"></div><div style="position:absolute;left:-155px;width:600px;text-align:right;top:774.46px;font-size:16px;line-height:16px;color:#222;font-weight:400;white-space:pre;letter-spacing:0.15px;">8</div><div style="position:absolute;left:455px;top:774.46px;font-size:16px;line-height:16px;color:#222;font-weight:400;white-space:pre;letter-spacing:0.15px;">14211</div><div style="position:absolute;left:536px;top:774.46px;font-size:16px;line-height:16px;color:#222;font-weight:400;white-space:pre;letter-spacing:0.15px;">1F_4O_2E_J_1C</div><div style="position:absolute;left:333px;top:793px;width:837px;height:24px;background:#f7f7f7"></div><div style="position:absolute;left:333px;top:793px;width:837px;height:1px;background:#d9d9d9"></div><div style="position:absolute;left:450px;top:793px;width:1px;height:24px;background:#dcdcdc"></div><div style="position:absolute;left:531px;top:793px;width:1px;height:24px;background:#dcdcdc"></div><div style="position:absolute;left:693px;top:793px;width:1px;height:24px;background:#dcdcdc"></div><div style="position:absolute;left:-155px;width:600px;text-align:right;top:798.46px;font-size:16px;line-height:16px;color:#222;font-weight:400;white-space:pre;letter-spacing:0.15px;">9</div><div style="position:absolute;left:455px;top:798.46px;font-size:16px;line-height:16px;color:#222;font-weight:400;white-space:pre;letter-spacing:0.15px;">21121</div><div style="position:absolute;left:536px;top:798.46px;font-size:16px;line-height:16px;color:#222;font-weight:400;white-space:pre;letter-spacing:0.15px;">2F_1O_1E_B_1C</div><div style="position:absolute;left:333px;top:817px;width:837px;height:24px;background:#ffffff"></div><div style="position:absolute;left:333px;top:817px;width:837px;height:1px;background:#d9d9d9"></div><div style="position:absolute;left:450px;top:817px;width:1px;height:24px;background:#dcdcdc"></div><div style="position:absolute;left:531px;top:817px;width:1px;height:24px;background:#dcdcdc"></div><div style="position:absolute;left:693px;top:817px;width:1px;height:24px;background:#dcdcdc"></div><div style="position:absolute;left:-155px;width:600px;text-align:right;top:822.46px;font-size:16px;line-height:16px;color:#222;font-weight:400;white-space:pre;letter-spacing:0.15px;">10</div><div style="position:absolute;left:455px;top:822.46px;font-size:16px;line-height:16px;color:#222;font-weight:400;white-space:pre;letter-spacing:0.15px;">22121</div><div style="position:absolute;left:536px;top:822.46px;font-size:16px;line-height:16px;color:#222;font-weight:400;white-space:pre;letter-spacing:0.15px;">2F_2O_1E_B_1C</div><div style="position:absolute;left:333px;top:841px;width:837px;height:24px;background:#f7f7f7"></div><div style="position:absolute;left:333px;top:841px;width:837px;height:1px;background:#d9d9d9"></div><div style="position:absolute;left:450px;top:841px;width:1px;height:24px;background:#dcdcdc"></div><div style="position:absolute;left:531px;top:841px;width:1px;height:24px;background:#dcdcdc"></div><div style="position:absolute;left:693px;top:841px;width:1px;height:24px;background:#dcdcdc"></div><div style="position:absolute;left:-155px;width:600px;text-align:right;top:846.46px;font-size:16px;line-height:16px;color:#222;font-weight:400;white-space:pre;letter-spacing:0.15px;">11</div><div style="position:absolute;left:455px;top:846.46px;font-size:16px;line-height:16px;color:#222;font-weight:400;white-space:pre;letter-spacing:0.15px;">23121</div><div style="position:absolute;left:536px;top:846.46px;font-size:16px;line-height:16px;color:#222;font-weight:400;white-space:pre;letter-spacing:0.15px;">2F_3O_1E_B_1C</div><div style="position:absolute;left:333px;top:865px;width:837px;height:24px;background:#ffffff"></div><div style="position:absolute;left:333px;top:865px;width:837px;height:1px;background:#d9d9d9"></div><div style="position:absolute;left:450px;top:865px;width:1px;height:24px;background:#dcdcdc"></div><div style="position:absolute;left:531px;top:865px;width:1px;height:24px;background:#dcdcdc"></div><div style="position:absolute;left:693px;top:865px;width:1px;height:24px;background:#dcdcdc"></div><div style="position:absolute;left:-155px;width:600px;text-align:right;top:870.46px;font-size:16px;line-height:16px;color:#222;font-weight:400;white-space:pre;letter-spacing:0.15px;">12</div><div style="position:absolute;left:455px;top:870.46px;font-size:16px;line-height:16px;color:#222;font-weight:400;white-space:pre;letter-spacing:0.15px;">24121</div><div style="position:absolute;left:536px;top:870.46px;font-size:16px;line-height:16px;color:#222;font-weight:400;white-space:pre;letter-spacing:0.15px;">2F_4O_1E_B_1C</div><div style="position:absolute;left:333px;top:889px;width:837px;height:24px;background:#f7f7f7"></div><div style="position:absolute;left:333px;top:889px;width:837px;height:1px;background:#d9d9d9"></div><div style="position:absolute;left:450px;top:889px;width:1px;height:24px;background:#dcdcdc"></div><div style="position:absolute;left:531px;top:889px;width:1px;height:24px;background:#dcdcdc"></div><div style="position:absolute;left:693px;top:889px;width:1px;height:24px;background:#dcdcdc"></div><div style="position:absolute;left:-155px;width:600px;text-align:right;top:894.46px;font-size:16px;line-height:16px;color:#222;font-weight:400;white-space:pre;letter-spacing:0.15px;">13</div><div style="position:absolute;left:455px;top:894.46px;font-size:16px;line-height:16px;color:#222;font-weight:400;white-space:pre;letter-spacing:0.15px;">21221</div><div style="position:absolute;left:536px;top:894.46px;font-size:16px;line-height:16px;color:#222;font-weight:400;white-space:pre;letter-spacing:0.15px;">2F_1O_2E_B_1C</div><div style="position:absolute;left:333px;top:913px;width:837px;height:24px;background:#ffffff"></div><div style="position:absolute;left:333px;top:913px;width:837px;height:1px;background:#d9d9d9"></div><div style="position:absolute;left:450px;top:913px;width:1px;height:24px;background:#dcdcdc"></div><div style="position:absolute;left:531px;top:913px;width:1px;height:24px;background:#dcdcdc"></div><div style="position:absolute;left:693px;top:913px;width:1px;height:24px;background:#dcdcdc"></div><div style="position:absolute;left:-155px;width:600px;text-align:right;top:918.46px;font-size:16px;line-height:16px;color:#222;font-weight:400;white-space:pre;letter-spacing:0.15px;">14</div><div style="position:absolute;left:455px;top:918.46px;font-size:16px;line-height:16px;color:#222;font-weight:400;white-space:pre;letter-spacing:0.15px;">22221</div><div style="position:absolute;left:536px;top:918.46px;font-size:16px;line-height:16px;color:#222;font-weight:400;white-space:pre;letter-spacing:0.15px;">2F_2O_2E_B_1C</div><div style="position:absolute;left:333px;top:937px;width:837px;height:24px;background:#f7f7f7"></div><div style="position:absolute;left:333px;top:937px;width:837px;height:1px;background:#d9d9d9"></div><div style="position:absolute;left:450px;top:937px;width:1px;height:24px;background:#dcdcdc"></div><div style="position:absolute;left:531px;top:937px;width:1px;height:24px;background:#dcdcdc"></div><div style="position:absolute;left:693px;top:937px;width:1px;height:24px;background:#dcdcdc"></div><div style="position:absolute;left:-155px;width:600px;text-align:right;top:942.46px;font-size:16px;line-height:16px;color:#222;font-weight:400;white-space:pre;letter-spacing:0.15px;">15</div><div style="position:absolute;left:455px;top:942.46px;font-size:16px;line-height:16px;color:#222;font-weight:400;white-space:pre;letter-spacing:0.15px;">23221</div><div style="position:absolute;left:536px;top:942.46px;font-size:16px;line-height:16px;color:#222;font-weight:400;white-space:pre;letter-spacing:0.15px;">2F_3O_2E_B_1C</div><div style="position:absolute;left:333px;top:961px;width:837px;height:24px;background:#ffffff"></div><div style="position:absolute;left:333px;top:961px;width:837px;height:1px;background:#d9d9d9"></div><div style="position:absolute;left:450px;top:961px;width:1px;height:24px;background:#dcdcdc"></div><div style="position:absolute;left:531px;top:961px;width:1px;height:24px;background:#dcdcdc"></div><div style="position:absolute;left:693px;top:961px;width:1px;height:24px;background:#dcdcdc"></div><div style="position:absolute;left:-155px;width:600px;text-align:right;top:966.46px;font-size:16px;line-height:16px;color:#222;font-weight:400;white-space:pre;letter-spacing:0.15px;">16</div><div style="position:absolute;left:455px;top:966.46px;font-size:16px;line-height:16px;color:#222;font-weight:400;white-space:pre;letter-spacing:0.15px;">24221</div><div style="position:absolute;left:536px;top:966.46px;font-size:16px;line-height:16px;color:#222;font-weight:400;white-space:pre;letter-spacing:0.15px;">2F_4O_2E_B_1C</div><div style="position:absolute;left:333px;top:985px;width:837px;height:24px;background:#f7f7f7"></div><div style="position:absolute;left:333px;top:985px;width:837px;height:1px;background:#d9d9d9"></div><div style="position:absolute;left:450px;top:985px;width:1px;height:24px;background:#dcdcdc"></div><div style="position:absolute;left:531px;top:985px;width:1px;height:24px;background:#dcdcdc"></div><div style="position:absolute;left:693px;top:985px;width:1px;height:24px;background:#dcdcdc"></div><div style="position:absolute;left:-155px;width:600px;text-align:right;top:990.46px;font-size:16px;line-height:16px;color:#222;font-weight:400;white-space:pre;letter-spacing:0.15px;">17</div><div style="position:absolute;left:455px;top:990.46px;font-size:16px;line-height:16px;color:#222;font-weight:400;white-space:pre;letter-spacing:0.15px;">21111</div><div style="position:absolute;left:536px;top:990.46px;font-size:16px;line-height:16px;color:#222;font-weight:400;white-space:pre;letter-spacing:0.15px;">2F_1O_1E_J_1C</div><div style="position:absolute;left:333px;top:1009px;width:837px;height:24px;background:#ffffff"></div><div style="position:absolute;left:333px;top:1009px;width:837px;height:1px;background:#d9d9d9"></div><div style="position:absolute;left:450px;top:1009px;width:1px;height:24px;background:#dcdcdc"></div><div style="position:absolute;left:531px;top:1009px;width:1px;height:24px;background:#dcdcdc"></div><div style="position:absolute;left:693px;top:1009px;width:1px;height:24px;background:#dcdcdc"></div><div style="position:absolute;left:-155px;width:600px;text-align:right;top:1014.46px;font-size:16px;line-height:16px;color:#222;font-weight:400;white-space:pre;letter-spacing:0.15px;">18</div><div style="position:absolute;left:455px;top:1014.46px;font-size:16px;line-height:16px;color:#222;font-weight:400;white-space:pre;letter-spacing:0.15px;">22111</div><div style="position:absolute;left:536px;top:1014.46px;font-size:16px;line-height:16px;color:#222;font-weight:400;white-space:pre;letter-spacing:0.15px;">2F_2O_1E_J_1C</div><div style="position:absolute;left:333px;top:1033px;width:837px;height:24px;background:#f7f7f7"></div><div style="position:absolute;left:333px;top:1033px;width:837px;height:1px;background:#d9d9d9"></div><div style="position:absolute;left:450px;top:1033px;width:1px;height:24px;background:#dcdcdc"></div><div style="position:absolute;left:531px;top:1033px;width:1px;height:24px;background:#dcdcdc"></div><div style="position:absolute;left:693px;top:1033px;width:1px;height:24px;background:#dcdcdc"></div><div style="position:absolute;left:-155px;width:600px;text-align:right;top:1038.46px;font-size:16px;line-height:16px;color:#222;font-weight:400;white-space:pre;letter-spacing:0.15px;">19</div><div style="position:absolute;left:455px;top:1038.46px;font-size:16px;line-height:16px;color:#222;font-weight:400;white-space:pre;letter-spacing:0.15px;">23111</div><div style="position:absolute;left:536px;top:1038.46px;font-size:16px;line-height:16px;color:#222;font-weight:400;white-space:pre;letter-spacing:0.15px;">2F_3O_1E_J_1C</div><div style="position:absolute;left:333px;top:1057px;width:837px;height:24px;background:#ffffff"></div><div style="position:absolute;left:333px;top:1057px;width:837px;height:1px;background:#d9d9d9"></div><div style="position:absolute;left:450px;top:1057px;width:1px;height:24px;background:#dcdcdc"></div><div style="position:absolute;left:531px;top:1057px;width:1px;height:24px;background:#dcdcdc"></div><div style="position:absolute;left:693px;top:1057px;width:1px;height:24px;background:#dcdcdc"></div><div style="position:absolute;left:-155px;width:600px;text-align:right;top:1062.46px;font-size:16px;line-height:16px;color:#222;font-weight:400;white-space:pre;letter-spacing:0.15px;">20</div><div style="position:absolute;left:455px;top:1062.46px;font-size:16px;line-height:16px;color:#222;font-weight:400;white-space:pre;letter-spacing:0.15px;">24111</div><div style="position:absolute;left:536px;top:1062.46px;font-size:16px;line-height:16px;color:#222;font-weight:400;white-space:pre;letter-spacing:0.15px;">2F_4O_1E_J_1C</div><div style="position:absolute;left:333px;top:1081px;width:837px;height:3px;background:#dcdcdc"></div><div style="position:absolute;left:1170px;top:578px;width:24px;height:506px;background:#e6e6e6"></div><div style="position:absolute;left:1172px;top:578px;width:21px;height:22px;background:linear-gradient(#f4f4f4,#e6e6e6)"></div><div style="position:absolute;left:1172px;top:602px;width:21px;height:22px;background:linear-gradient(#f4f4f4,#e6e6e6)"></div><div style="position:absolute;left:1172px;top:626px;width:21px;height:22px;background:linear-gradient(#f4f4f4,#e6e6e6)"></div><div style="position:absolute;left:1172px;top:1014px;width:21px;height:22px;background:linear-gradient(#f4f4f4,#e2e2e2)"></div><div style="position:absolute;left:1172px;top:1037px;width:21px;height:22px;background:linear-gradient(#f4f4f4,#e2e2e2)"></div><div style="position:absolute;left:1172px;top:1060px;width:21px;height:22px;background:linear-gradient(#f4f4f4,#e2e2e2)"></div><svg style="position:absolute;left:0;top:0;overflow:visible" width="1" height="1"><rect x="1176" y="582" width="13" height="2" fill="#b0b0b0"/><path d="M1177 593L1182.5 587L1188 593" fill="none" stroke="#b0b0b0" stroke-width="2"/><path d="M1177 611L1182.5 605L1188 611" fill="none" stroke="#b0b0b0" stroke-width="2"/><path d="M1177 617L1182.5 611L1188 617" fill="none" stroke="#b0b0b0" stroke-width="2"/><path d="M1177 637L1182.5 631L1188 637" fill="none" stroke="#b0b0b0" stroke-width="2"/><path d="M1177 1021L1182.5 1027L1188 1021" fill="none" stroke="#3a78b8" stroke-width="2.2"/><path d="M1177 1041L1182.5 1047L1188 1041" fill="none" stroke="#3a78b8" stroke-width="2.2"/><path d="M1177 1047L1182.5 1053L1188 1047" fill="none" stroke="#3a78b8" stroke-width="2.2"/><path d="M1177 1066L1182.5 1072L1188 1066" fill="none" stroke="#3a78b8" stroke-width="2.2"/><rect x="1176" y="1074" width="13" height="2" fill="#3a78b8"/></svg><div style="position:absolute;left:0px;top:434px;width:325px;height:551px;background:#808080"></div><div style="position:absolute;left:12px;top:434px;width:6px;height:551px;background:#0050a0"></div><div style="position:absolute;left:30px;top:434px;width:6px;height:150px;background:#0050a0"></div><div style="position:absolute;left:18px;top:485px;width:12px;height:25px;background:#0050a0"></div><div style="position:absolute;left:30px;top:583px;width:295px;height:1px;background:#0050a0"></div><div style="position:absolute;left:12px;top:985px;width:294px;height:2px;background:#0050a0"></div><div style="position:absolute;left:0px;top:985px;width:12px;height:1px;background:#3a6aa8"></div><svg style="position:absolute;left:0;top:0;overflow:visible" width="1" height="1">
<path d="M1.5 450L7 445" stroke="#d63a2a" stroke-width="3"/><path d="M7 446L12 442.5" stroke="#4a8ae0" stroke-width="3"/>
<circle cx="7" cy="443" r="2" fill="none" stroke="#e8e8e8" stroke-width="1.5"/>
<path d="M2 454L8 450" stroke="#f0f0f0" stroke-width="2.5"/><rect x="8" y="449" width="4" height="7" fill="#8a9aa0"/>
<path d="M1 468.5L12 467V482H3Z" fill="#e6e6e6"/><path d="M1 469L3.5 481" stroke="#e0901a" stroke-width="2"/>
<rect x="1" y="491" width="11" height="6" fill="#f2cc40"/><rect x="1" y="497" width="5" height="6" fill="#2040b0"/><rect x="6" y="497" width="6" height="8" fill="#1a2a90"/>
<rect x="2" y="502" width="4" height="4" fill="#a02030"/><rect x="10" y="497" width="2" height="9" fill="#e8e8e8"/>
<rect x="0" y="524" width="12" height="1" fill="#0050a0"/><rect x="0" y="624" width="12" height="1" fill="#0050a0"/>
<rect x="2" y="641" width="10" height="17" fill="#d8e2e6"/><rect x="4" y="644" width="6" height="2" fill="#9aa6aa"/>
<path d="M1 654L8 649L12 650V656L5 657Z" fill="#2a9a3a"/><path d="M2 653L9 651" stroke="#6ac04a" stroke-width="1.2"/>
<path d="M1 670L4 667H12V680L7 682H2Z" fill="#c8a060"/><rect x="4" y="670" width="4" height="12" fill="#d8b478"/><rect x="10" y="674" width="2" height="8" fill="#f0f4ff"/>
<path d="M2 749L8 743L12 744V757H3Z" fill="#3a9ae0"/><path d="M5 747L11 741V752Z" fill="#e02020"/><rect x="4" y="751" width="3" height="5" fill="#1a4a90"/>
<path d="M1 773L7 767L12 770V782H1Z" fill="#dcdcdc"/><circle cx="10" cy="772" r="3" fill="#b0b870"/><circle cx="10" cy="777" r="3" fill="#d08070"/>
<rect x="1" y="792" width="9" height="12" fill="#e0e0e8"/><rect x="3" y="791" width="6" height="2" fill="#f0c040"/><path d="M5 807Q5 800 9 799Q12 800 12 807Z" fill="#d020a0"/><circle cx="9.5" cy="796" r="2.5" fill="#f0c8a0"/>
<rect x="0" y="836" width="12" height="26" fill="#0050a0"/>
<path d="M1 845L6 841L12 842V854L7 857L1 855Z" fill="#e060b0"/><path d="M2 846L10 854M10 846L2 854" stroke="#a03080" stroke-width="1.2"/>
<circle cx="5" cy="978" r="4.5" fill="none" stroke="#7a98a8" stroke-width="2.2"/><path d="M8 972L11 965" stroke="#8a70b0" stroke-width="2"/>
</svg><div style="position:absolute;left:63px;top:438.46px;font-size:16px;line-height:16px;color:#f2f2f2;font-weight:400;white-space:pre;letter-spacing:0.15px;">Cikk besorolás</div><div style="position:absolute;left:63px;top:463.46px;font-size:16px;line-height:16px;color:#f2f2f2;font-weight:400;white-space:pre;letter-spacing:0.15px;">Gyártási szám paraméterek</div><div style="position:absolute;left:63px;top:488.46px;font-size:16px;line-height:16px;color:#f2f2f2;font-weight:400;white-space:pre;letter-spacing:0.15px;">Előkalkuláció</div><div style="position:absolute;left:63px;top:513.46px;font-size:16px;line-height:16px;color:#f2f2f2;font-weight:400;white-space:pre;letter-spacing:0.15px;">Mennyiségi egység</div><div style="position:absolute;left:63px;top:538.46px;font-size:16px;line-height:16px;color:#f2f2f2;font-weight:400;white-space:pre;letter-spacing:0.15px;">Népegészségügyi termékadó törzs</div><div style="position:absolute;left:63px;top:563.46px;font-size:16px;line-height:16px;color:#f2f2f2;font-weight:400;white-space:pre;letter-spacing:0.15px;">ADR</div><div style="position:absolute;left:45px;top:590.46px;font-size:16px;line-height:16px;color:#f2f2f2;font-weight:400;white-space:pre;letter-spacing:0.15px;">Naptár (Alt+N)</div><div style="position:absolute;left:45px;top:615.46px;font-size:16px;line-height:16px;color:#f2f2f2;font-weight:400;white-space:pre;letter-spacing:0.15px;">Etikett definiálás</div><div style="position:absolute;left:45px;top:640.46px;font-size:16px;line-height:16px;color:#f2f2f2;font-weight:400;white-space:pre;letter-spacing:0.15px;">Etikett nyomtatás</div><div style="position:absolute;left:45px;top:665.46px;font-size:16px;line-height:16px;color:#f2f2f2;font-weight:400;white-space:pre;letter-spacing:0.15px;">Cimkenyomtatás</div><div style="position:absolute;left:45px;top:690.46px;font-size:16px;line-height:16px;color:#f2f2f2;font-weight:400;white-space:pre;letter-spacing:0.15px;">Bizonylatkezelés jogosultság funkciók</div><div style="position:absolute;left:45px;top:715.46px;font-size:16px;line-height:16px;color:#f2f2f2;font-weight:400;white-space:pre;letter-spacing:0.15px;">Bizonylatkezelés jogosultság funkciók</div><div style="position:absolute;left:45px;top:740.46px;font-size:16px;line-height:16px;color:#f2f2f2;font-weight:400;white-space:pre;letter-spacing:0.15px;">Ügyfél Besorolás</div><div style="position:absolute;left:45px;top:765.46px;font-size:16px;line-height:16px;color:#f2f2f2;font-weight:400;white-space:pre;letter-spacing:0.15px;">Ügyfélszemély besorolás</div><div style="position:absolute;left:45px;top:790.46px;font-size:16px;line-height:16px;color:#f2f2f2;font-weight:400;white-space:pre;letter-spacing:0.15px;">NYELV Teljes</div><div style="position:absolute;left:45px;top:815.46px;font-size:16px;line-height:16px;color:#f2f2f2;font-weight:400;white-space:pre;letter-spacing:0.15px;">NYELV Módosítás</div><div style="position:absolute;left:45px;top:840.46px;font-size:16px;line-height:16px;color:#f2f2f2;font-weight:400;white-space:pre;letter-spacing:0.15px;">NYELV Módosítás</div><div style="position:absolute;left:45px;top:865.46px;font-size:16px;line-height:16px;color:#f2f2f2;font-weight:400;white-space:pre;letter-spacing:0.15px;">Ország</div><div style="position:absolute;left:45px;top:890.46px;font-size:16px;line-height:16px;color:#f2f2f2;font-weight:400;white-space:pre;letter-spacing:0.15px;">Besorolástörzsek</div><div style="position:absolute;left:45px;top:915.46px;font-size:16px;line-height:16px;color:#f2f2f2;font-weight:400;white-space:pre;letter-spacing:0.15px;">Struktúra adatok másolása</div><div style="position:absolute;left:45px;top:940.46px;font-size:16px;line-height:16px;color:#f2f2f2;font-weight:400;white-space:pre;letter-spacing:0.15px;">Listaformázó</div><div style="position:absolute;left:45px;top:965.46px;font-size:16px;line-height:16px;color:#f2f2f2;font-weight:400;white-space:pre;letter-spacing:0.15px;">Extramező-kezelés</div><div style="position:absolute;left:1644px;top:24px;width:40px;height:30px;background:linear-gradient(#f6f6f6,#e4e4e4);border-left:1px solid #e8e8e8;box-sizing:border-box"></div><div style="position:absolute;left:1685px;top:24px;width:40px;height:30px;background:linear-gradient(#f6f6f6,#e4e4e4);border-left:1px solid #e8e8e8;box-sizing:border-box"></div><div style="position:absolute;left:1726px;top:24px;width:40px;height:30px;background:linear-gradient(#f6f6f6,#e4e4e4);border-left:1px solid #e8e8e8;box-sizing:border-box"></div><div style="position:absolute;left:1767px;top:24px;width:40px;height:30px;background:linear-gradient(#f6f6f6,#e4e4e4);border-left:1px solid #e8e8e8;box-sizing:border-box"></div><div style="position:absolute;left:1808px;top:24px;width:40px;height:30px;background:linear-gradient(#f6f6f6,#e4e4e4);border-left:1px solid #e8e8e8;box-sizing:border-box"></div><svg style="position:absolute;left:0;top:0;overflow:visible" width="1" height="1">
<ellipse cx="1664" cy="35" rx="6.5" ry="7.5" fill="#ebb563"/>
<path d="M1652 51Q1652 48 1654 45Q1657 41 1660 41Q1664 44 1668 41Q1671 41 1674 45Q1676 48 1676 51Z" fill="#8b4fae"/>
<rect x="1693" y="27" width="11" height="11" fill="#d24e31"/><rect x="1706" y="27" width="11" height="11" fill="#55ad86"/>
<rect x="1693" y="40" width="11" height="11" fill="#3b79b8"/><rect x="1706" y="40" width="11" height="11" fill="#ebb563"/>
<path d="M1734 32L1749 31" stroke="#4aabb0" stroke-width="3.5" stroke-linecap="round"/><path d="M1748 26L1759 33L1748 40Z" fill="#4aabb0"/>
<path d="M1757 44L1742 45" stroke="#3b79b8" stroke-width="3.5" stroke-linecap="round"/><path d="M1743 38L1733 45L1743 52Z" fill="#3b79b8"/>
<circle cx="1787" cy="39" r="10.4" fill="none" stroke="#3b79b8" stroke-width="2.8"/>
<circle cx="1787" cy="34" r="2" fill="#3b79b8"/><path d="M1784.8 37.3H1788.9V43.3H1789.9V45.5H1784.6V43.3H1785.5V39.2H1784.8Z" fill="#3b79b8"/>
</svg><svg style="position:absolute;left:0;top:0;overflow:visible" width="1" height="1"><path d="M1822.3 33.8Q1822.3 29.6 1828.8 29.6Q1834.6 29.6 1834.6 33.8Q1834.6 36.4 1831 38.2Q1826.6 40.4 1826.6 43.4" fill="none" stroke="#3b79b8" stroke-width="4.8"/><rect x="1824" y="45.3" width="7" height="5.7" fill="#3b79b8"/></svg></body></html>
